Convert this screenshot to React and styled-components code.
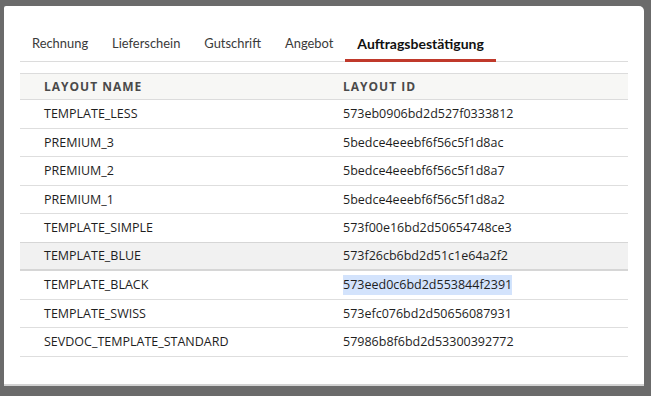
import React from 'react';
import styled, { createGlobalStyle } from 'styled-components';

const layouts = [
  { name: 'TEMPLATE_LESS', id: '573eb0906bd2d527f0333812' },
  { name: 'PREMIUM_3', id: '5bedce4eeebf6f56c5f1d8ac' },
  { name: 'PREMIUM_2', id: '5bedce4eeebf6f56c5f1d8a7' },
  { name: 'PREMIUM_1', id: '5bedce4eeebf6f56c5f1d8a2' },
  { name: 'TEMPLATE_SIMPLE', id: '573f00e16bd2d50654748ce3' },
  { name: 'TEMPLATE_BLUE', id: '573f26cb6bd2d51c1e64a2f2', hover: true },
  { name: 'TEMPLATE_BLACK', id: '573eed0c6bd2d553844f2391', selected: true },
  { name: 'TEMPLATE_SWISS', id: '573efc076bd2d50656087931' },
  { name: 'SEVDOC_TEMPLATE_STANDARD', id: '57986b8f6bd2d53300392772' },
];

const tabs = ['Rechnung', 'Lieferschein', 'Gutschrift', 'Angebot', 'Auftragsbestätigung'];

const App = () => {
  return (
    <>
      <GlobalStyle />
      <Backdrop>
        <Modal>
          <TabList>
            {tabs.map((t, i) => (
              <Tab key={t} active={i === tabs.length - 1}>
                {t}
              </Tab>
            ))}
          </TabList>
          <Table>
            <HeaderRow>
              <HeadCell>Layout Name</HeadCell>
              <HeadCell>Layout ID</HeadCell>
            </HeaderRow>
            {layouts.map((l) => (
              <Row key={l.id} hover={l.hover}>
                <Cell>{l.name}</Cell>
                <Cell>{l.selected ? <Selection>{l.id}</Selection> : l.id}</Cell>
              </Row>
            ))}
          </Table>
        </Modal>
      </Backdrop>
    </>
  );
};
export default App;

const GlobalStyle = createGlobalStyle`
  html, body {
    margin: 0;
    padding: 0;
    background: #6b6b6b;
    font-family: "Segoe UI", "Open Sans", "Noto Sans", sans-serif;
  }
`;

const Backdrop = styled.div`
  width: 651px;
  height: 396px;
  padding: 6px 0 0 4px;
  box-sizing: border-box;
  background: #6b6b6b;
`;

const Modal = styled.div`
  width: 640px;
  height: 380px;
  box-sizing: border-box;
  background: #fff;
  border-radius: 2px 5px 0 0;
  border-bottom: 2px solid #d2d2d2;
  padding: 20px 16px 0;
`;

const TabList = styled.div`
  display: flex;
  border-bottom: 1px solid #dcdcdc;
`;

const Tab = styled.div`
  padding: 8px 12px 6px;
  margin-bottom: -1px;
  font-family: Lato, "Open Sans", sans-serif;
  font-size: ${({ active }) => (active ? '14px' : '12.9px')};
  line-height: 19px;
  color: ${({ active }) => (active ? '#111' : '#3a3a3a')};
  font-weight: ${({ active }) => (active ? 700 : 400)};
  border-bottom: 3px solid ${({ active }) => (active ? '#c0392b' : 'transparent')};
`;

const Table = styled.div`
  margin-top: 11px;
  border-top: 1px solid #dcdcdc;
`;

const HeaderRow = styled.div`
  display: grid;
  grid-template-columns: 299px 1fr;
  height: 25px;
  align-items: center;
  background: #f7f7f5;
  border-bottom: 1px solid #dcdcdc;
`;

const HeadCell = styled.div`
  padding-left: 24px;
  font-size: 12px;
  font-weight: 700;
  letter-spacing: 1px;
  text-transform: uppercase;
  color: #4a4a4a;
`;

const Row = styled.div`
  display: grid;
  grid-template-columns: 299px 1fr;
  height: 28.5px;
  box-sizing: border-box;
  align-items: center;
  border-bottom: ${({ hover }) => (hover ? '2px solid #d6d6d6' : '1px solid #dedede')};
  background: ${({ hover }) => (hover ? '#f1f1f1' : '#fff')};
  box-shadow: ${({ hover }) => (hover ? '0 -1px 0 #d6d6d6' : 'none')};
`;

const Cell = styled.div`
  padding-left: 24px;
  font-size: 12.5px;
  color: #1e1e1e;
  white-space: nowrap;
`;

const Selection = styled.span`
  display: inline-block;
  line-height: 20px;
  background: #d3e3fc;
`;
